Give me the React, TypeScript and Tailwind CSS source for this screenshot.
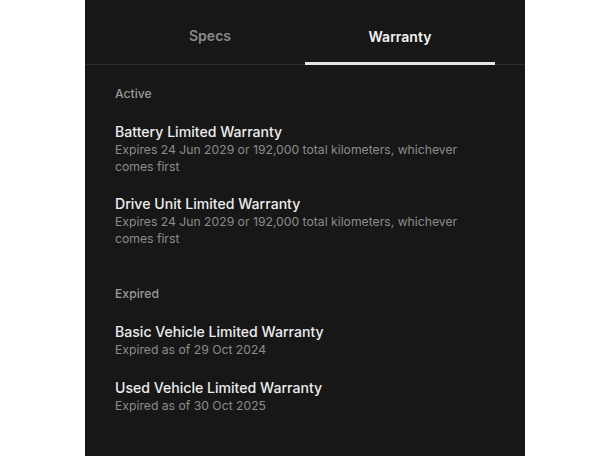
const active = [
  {
    title: "Battery Limited Warranty",
    detail: "Expires 24 Jun 2029 or 192,000 total kilometers, whichever comes first",
  },
  {
    title: "Drive Unit Limited Warranty",
    detail: "Expires 24 Jun 2029 or 192,000 total kilometers, whichever comes first",
  },
];

const expired = [
  { title: "Basic Vehicle Limited Warranty", detail: "Expired as of 29 Oct 2024" },
  { title: "Used Vehicle Limited Warranty", detail: "Expired as of 30 Oct 2025" },
];

function Item({ title, detail }: { title: string; detail: string }) {
  return (
    <div className="mb-[19px]">
      <div className="text-[14.1px] leading-[19px] font-medium text-[#ececec]">{title}</div>
      <div className="text-[12.2px] leading-[17px] text-[#8c8c8c]">{detail}</div>
    </div>
  );
}

export default function App() {
  return (
    <div className="flex h-[456px] w-full bg-white pl-[85px] font-['Inter',sans-serif]">
      <div className="h-full w-[440px] bg-[#171717]">
        <div className="flex border-b border-[#2e2e2e] px-[30px]">
          <button className="flex-1 pt-[26px] pb-[18px] text-[14px] leading-[20px] font-semibold text-[#8a8a8a]">
            Specs
          </button>
          <button className="-mb-px flex-1 border-b-[3px] border-[#e4e4e4] pt-[26px] pb-[15px] text-[14px] leading-[20px] font-semibold text-[#f2f2f2]">
            Warranty
          </button>
        </div>

        <div className="px-[30px] pt-[20px]">
          <div className="mb-[20px] text-[12.2px] leading-[17px] font-medium text-[#9a9a9a]">Active</div>
          {active.map((w) => (
            <Item key={w.title} {...w} />
          ))}
          <div className="mt-[38px] mb-[20px] text-[12.2px] leading-[17px] font-medium text-[#9a9a9a]">
            Expired
          </div>
          <div className="flex flex-col gap-px">
            {expired.map((w) => (
              <Item key={w.title} {...w} />
            ))}
          </div>
        </div>
      </div>
    </div>
  );
}
